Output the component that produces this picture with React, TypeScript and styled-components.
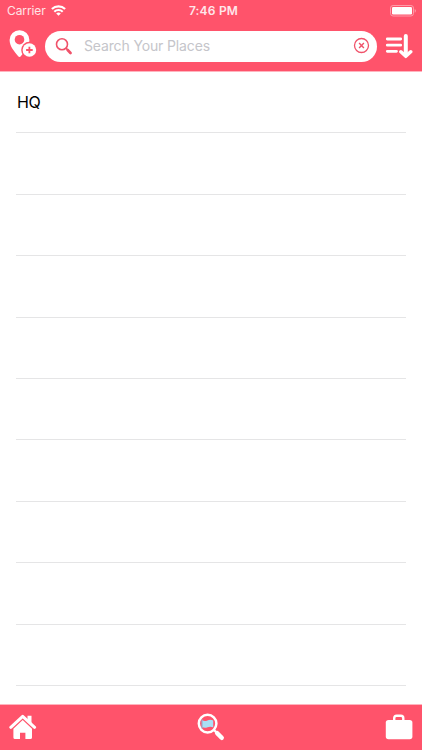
import React from 'react';
import styled, { createGlobalStyle } from 'styled-components';

const RED = '#ff536b';

const GlobalStyle = createGlobalStyle`
  * { box-sizing: border-box; }
  body { margin: 0; background: #fff; font-family: Inter, "Liberation Sans", sans-serif; }
`;

const Screen = styled.div`
  width: 422px;
  height: 750px;
  display: flex;
  flex-direction: column;
  background: #fff;
  overflow: hidden;
`;

const Header = styled.header`
  flex: none;
  height: 72px;
  background: ${RED};
  border-bottom: 1px solid #ffb4be;
`;

const StatusBar = styled.div`
  height: 22px;
  display: grid;
  grid-template-columns: 1fr auto 1fr;
  align-items: center;
  padding: 0 6px 0 7px;
  color: #fff;
  font-size: 12px;
  line-height: 22px;
`;

const Carrier = styled.div`
  display: flex;
  align-items: center;
  gap: 5px;
  color: #ffe3e7;
  letter-spacing: -0.1px;
`;

const Clock = styled.div`
  font-weight: 600;
  color: #ffe6ea;
  font-size: 12px;
  letter-spacing: 0.2px;
  padding-left: 4px;
`;

const BatterySlot = styled.div`
  display: flex;
  justify-content: flex-end;
`;

const SearchRow = styled.div`
  height: 48px;
  display: flex;
  align-items: center;
  padding: 0 9px;
`;

const IconButton = styled.button<{ $w: number; $h: number }>`
  width: ${(p) => p.$w}px;
  height: ${(p) => p.$h}px;
  flex: none;
  padding: 0;
  border: 0;
  background: none;
  svg { display: block; }
`;

const SearchField = styled.div`
  flex: 1;
  height: 31px;
  margin: 0 8px 0 8px;
  padding: 0 7px 1px 10px;
  border-radius: 16px;
  background: #fff;
  display: flex;
  align-items: center;
`;

const Placeholder = styled.span`
  flex: 1;
  margin-left: 11px;
  color: #c5c5ca;
  font-size: 14px;
  line-height: 20px;
  letter-spacing: -0.14px;
`;

const List = styled.main`
  flex: 1;
  min-height: 0;
  overflow: hidden;
  padding: 0 16px;
`;

const Row = styled.div`
  height: 61.42px;
  display: flex;
  align-items: center;
  border-bottom: 1px solid #e5e5e6;
  font-size: 16px;
  letter-spacing: -0.4px;
  color: #000;
  padding-left: 1px;
`;

const TabBar = styled.nav`
  flex: none;
  height: 46px;
  background: ${RED};
  border-top: 1px solid #ffb4be;
  display: flex;
  justify-content: space-between;
  align-items: flex-start;
  padding: 8px 9px 0;
`;

const rows = ['HQ', '', '', '', '', '', '', '', '', ''];

const Wifi = () => (
  <svg width="15" height="12" viewBox="0 0 15 12" fill="none" stroke="#fff" strokeWidth="2.1">
    <path d="M.9 4.1a9.3 9.3 0 0 1 13.2 0M3.3 6.7a6 6 0 0 1 8.4 0" />
    <path d="M7.5 10.8 5.2 8.5a3.3 3.3 0 0 1 4.6 0Z" fill="#fff" stroke="none" />
  </svg>
);

const Battery = () => (
  <svg width="26" height="12" viewBox="0 0 26 12">
    <rect x=".5" y=".5" width="23" height="10.5" rx="2.6" fill="none" stroke="#ff9ba9" />
    <rect x="2" y="2" width="20" height="7.5" rx="1.2" fill="#fff" />
    <path d="M24.7 4v3.7q1.2-.5 1.2-1.85T24.7 4Z" fill="#ff9ba9" />
  </svg>
);

const AddPlace = () => (
  <svg width="28" height="33" viewBox="0 1.5 28 33">
    <path d="M10.5 1.7A9.8 9.8 0 0 0 .6 11.5c0 6.3 4.8 11.5 8.4 16q1.5 1.8 3 0c3.6-4.5 8.4-9.7 8.4-16A9.8 9.8 0 0 0 10.5 1.7Z" fill="#fff" />
    <circle cx="10.5" cy="11.2" r="4.8" fill={RED} />
    <circle cx="20.4" cy="21.5" r="8.2" fill={RED} />
    <circle cx="20.4" cy="21.5" r="6.8" fill="#fff" />
    <path d="M20.4 18.2v6.6M17.1 21.5h6.6" stroke={RED} strokeWidth="1.8" />
  </svg>
);

const SearchIcon = () => (
  <svg width="18" height="18" viewBox="0 0 18 18" fill="none" stroke="#f0526a">
    <circle cx="7" cy="7.2" r="5.5" strokeWidth="1.6" />
    <path d="m10.8 11 2 2" strokeWidth="1.6" />
    <path d="m12.7 13.1 2.8 2.8" strokeWidth="2.8" strokeLinecap="round" />
  </svg>
);

const ClearIcon = () => (
  <svg width="17" height="17" viewBox="0 0 17 17" fill="none" stroke="#f0526a" strokeWidth="1.3">
    <circle cx="8.5" cy="8.5" r="7" />
    <path d="m6.1 6.1 4.8 4.8m0-4.8-4.8 4.8" strokeWidth="1.4" />
  </svg>
);

const SortIcon = () => (
  <svg width="28" height="26" viewBox="0 0 28 26" fill="none" stroke="#fff" strokeLinecap="round" strokeLinejoin="round">
    <path d="M2.3 6h13.4M2.3 12.2h13.4M2.3 18.3h9.2" strokeWidth="2.8" />
    <path d="M20.8 2.9v18" strokeWidth="4" />
    <path d="m15.9 18.8 4.9 4.5 4.9-4.5" strokeWidth="3.5" />
  </svg>
);

const HomeIcon = () => (
  <svg width="28" height="28" viewBox="0 0 28 28">
    <path d="M1.8 14.3 13.7 3.3l11.9 11" fill="none" stroke="#fff" strokeWidth="3" strokeLinecap="round" strokeLinejoin="round" />
    <path d="M18.5 2.8h4v8.2l-4-3.8Z" fill="#fff" />
    <path d="M4.4 15.7 13.7 7.1l9.3 8.6v8.7q0 1.6-1.6 1.6h-5v-6.2H11V26H6q-1.6 0-1.6-1.6Z" fill="#fff" />
  </svg>
);

const ExploreIcon = () => (
  <svg width="28" height="28" viewBox="0 0 28 28">
    <circle cx="10.6" cy="10.6" r="8.8" fill="none" stroke="#fff" strokeWidth="2.5" />
    <path d="m17 17 2.7 2.7" stroke="#fff" strokeWidth="2.4" />
    <path d="m20.2 20.2 4.5 4.6" stroke="#fff" strokeWidth="4.5" strokeLinecap="round" />
    <path d="M5.2 7.2q2.4 1.3 5.2.2t5.8 0v6.9q-3-1.2-5.6-.1t-5.4.1Z" fill="#a9dff3" />
    <path d="M5 6.3v9.4" stroke="#83bde0" strokeWidth="1" />
  </svg>
);

const BriefcaseIcon = () => (
  <svg width="28" height="28" viewBox="0 0 28 28">
    <path d="M9.2 8V5.2Q9.2 2.8 11.6 2.8h4.3q2.4 0 2.4 2.4V8" fill="none" stroke="#fff" strokeWidth="2.4" />
    <rect x=".8" y="6.9" width="26.6" height="19.4" rx="2.7" fill="#fff" />
  </svg>
);

export default function App() {
  return (
    <>
      <GlobalStyle />
      <Screen>
        <Header>
          <StatusBar>
            <Carrier>Carrier <Wifi /></Carrier>
            <Clock>7:46 PM</Clock>
            <BatterySlot><Battery /></BatterySlot>
          </StatusBar>
          <SearchRow>
            <IconButton $w={28} $h={33} aria-label="Add place"><AddPlace /></IconButton>
            <SearchField>
              <SearchIcon />
              <Placeholder>Search Your Places</Placeholder>
              <ClearIcon />
            </SearchField>
            <IconButton $w={28} $h={26} aria-label="Sort places"><SortIcon /></IconButton>
          </SearchRow>
        </Header>
        <List>
          {rows.map((name, i) => <Row key={i}>{name}</Row>)}
        </List>
        <TabBar>
          <IconButton $w={28} $h={28} aria-label="Home"><HomeIcon /></IconButton>
          <IconButton $w={28} $h={28} aria-label="Explore"><ExploreIcon /></IconButton>
          <IconButton $w={28} $h={28} aria-label="Trips"><BriefcaseIcon /></IconButton>
        </TabBar>
      </Screen>
    </>
  );
}
